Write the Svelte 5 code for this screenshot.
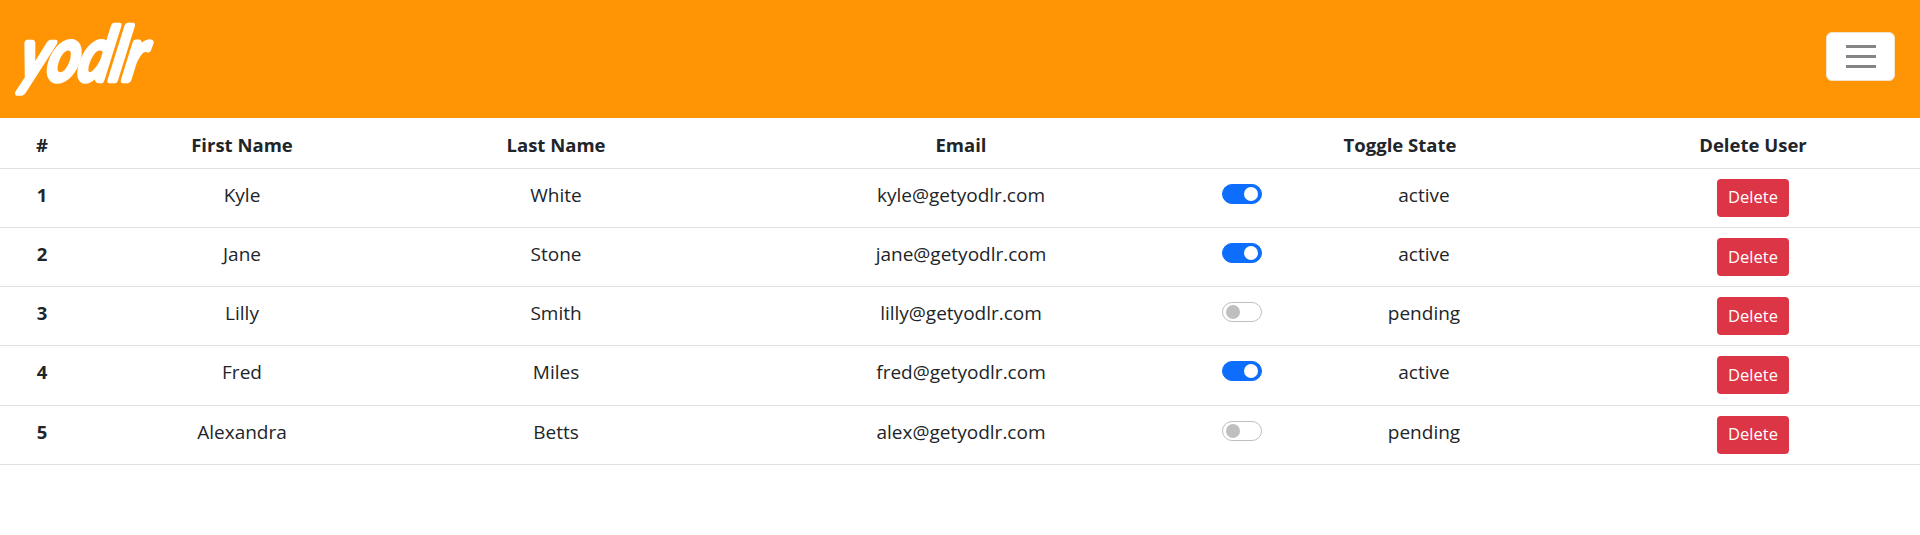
<script>
  let users = $state([
    { id: 1, first: "Kyle", last: "White", email: "kyle@getyodlr.com", state: "active" },
    { id: 2, first: "Jane", last: "Stone", email: "jane@getyodlr.com", state: "active" },
    { id: 3, first: "Lilly", last: "Smith", email: "lilly@getyodlr.com", state: "pending" },
    { id: 4, first: "Fred", last: "Miles", email: "fred@getyodlr.com", state: "active" },
    { id: 5, first: "Alexandra", last: "Betts", email: "alex@getyodlr.com", state: "pending" }
  ]);

  function toggleState(user) {
    user.state = user.state === "active" ? "pending" : "active";
  }

  function removeUser(id) {
    users = users.filter((u) => u.id !== id);
  }
</script>

<nav class="navbar">
  <svg class="brand" width="160" height="112" viewBox="0 0 160 112" role="img" aria-label="yodlr">
    <text transform="translate(11 77) skewX(-12) scale(0.86 1.05)">yodlr</text>
  </svg>
  <button class="toggler" aria-label="Toggle navigation">
    <span class="bar"></span>
    <span class="bar"></span>
    <span class="bar"></span>
  </button>
</nav>

<table>
  <colgroup>
    <col style="width: 84px" />
    <col style="width: 316px" />
    <col style="width: 312px" />
    <col style="width: 502px" />
    <col style="width: 372px" />
    <col />
  </colgroup>
  <thead>
    <tr>
      <th>#</th>
      <th>First Name</th>
      <th>Last Name</th>
      <th class="email">Email</th>
      <th>Toggle State</th>
      <th>Delete User</th>
    </tr>
  </thead>
  <tbody>
    {#each users as user (user.id)}
      <tr>
        <th>{user.id}</th>
        <td>{user.first}</td>
        <td>{user.last}</td>
        <td class="email">{user.email}</td>
        <td>
          <div class="form-switch">
            <input
              type="checkbox"
              checked={user.state === "active"}
              onchange={() => toggleState(user)}
            />
            <span>{user.state}</span>
          </div>
        </td>
        <td><button class="delete" onclick={() => removeUser(user.id)}>Delete</button></td>
      </tr>
    {/each}
  </tbody>
</table>

<style>
  :global(body) {
    font-family: "Open Sans", "Noto Sans", sans-serif;
    color: #212529;
    background: #fff;
  }
  .navbar {
    height: 118px;
    background: #ff9505;
    display: flex;
    align-items: flex-start;
    justify-content: space-between;
    padding: 0 25px 0 6px;
    box-sizing: border-box;
  }
  .brand {
    margin-top: 3px;
    overflow: visible;
  }
  .brand text {
    font-family: Lato, sans-serif;
    font-style: italic;
    font-weight: 400;
    font-size: 70px;
    fill: #fff;
    stroke: #fff;
    stroke-width: 6px;
    stroke-linejoin: round;
  }
  .toggler {
    width: 69px;
    height: 49px;
    margin-top: 32px;
    background: #fff;
    border: 1px solid #f4e4cd;
    border-radius: 6px;
    display: flex;
    flex-direction: column;
    align-items: center;
    justify-content: center;
    gap: 7.5px;
    padding: 0;
  }
  .bar {
    width: 30px;
    height: 2.5px;
    background: #858585;
  }
  table {
    width: 100%;
    border-collapse: collapse;
    table-layout: fixed;
    font-size: 19px;
  }
  th,
  td {
    text-align: center;
    vertical-align: top;
    border-bottom: 1px solid #dee2e6;
    padding: 11px 8px 17.25px;
    line-height: 30px;
    font-weight: 400;
  }
  th {
    font-weight: 700;
    font-size: 18.5px;
  }
  thead th {
    padding: 12px 8px 7.6px;
  }
  .email {
    padding-right: 12px;
  }
  td:last-child {
    padding: 10px 8px;
  }
  .form-switch {
    padding-left: 48px;
    text-align: center;
  }
  .form-switch input {
    appearance: none;
    float: left;
    width: 40px;
    height: 20px;
    margin: 4px 0 0 -48px;
    border-radius: 10px;
    border: 1px solid #bfbfbf;
    background: #fff;
    position: relative;
  }
  .form-switch input::after {
    content: "";
    position: absolute;
    left: 3px;
    top: 2px;
    width: 14px;
    height: 14px;
    border-radius: 50%;
    background: #bfbfbf;
  }
  .form-switch input:checked {
    background: #0d6efd;
    border-color: #0d6efd;
  }
  .form-switch input:checked::after {
    left: auto;
    right: 3px;
    background: #fff;
  }
  .delete {
    display: block;
    margin: 0 auto;
    font: inherit;
    font-size: 16.5px;
    line-height: 1;
    color: #fff;
    background: #dc3545;
    border: none;
    border-radius: 4px;
    height: 38px;
    width: 72px;
    padding: 0;
  }
</style>
